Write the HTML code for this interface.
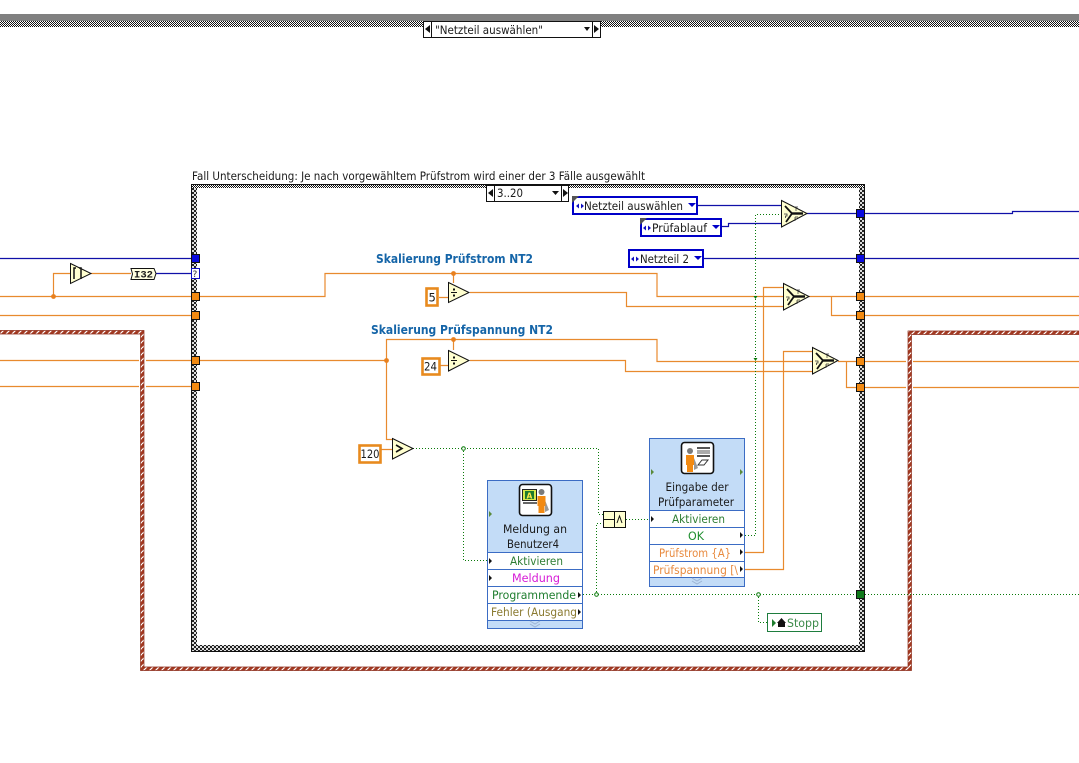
<!DOCTYPE html>
<html><head><meta charset="utf-8"><style>
html,body{margin:0;padding:0;background:#fff;width:1079px;height:763px;overflow:hidden}
svg{display:block;position:absolute;left:0;top:0}
text{font-family:"DejaVu Sans","Liberation Sans",sans-serif;font-size:11.5px;fill:#1a1a1a}
.w{fill:none;stroke:#E88A2E;stroke-width:1.2}
.b{fill:none;stroke:#1010A8;stroke-width:1.2}
.g{fill:none;stroke:#0A7A0A;stroke-width:1;stroke-dasharray:1 2}
.p{fill:#FFFFD0;stroke:#111;stroke-width:1}
.c{fill:#fff;stroke:#E88A1E;stroke-width:2.6}
.e{fill:#fff;stroke:#0000C8;stroke-width:2}
.t{stroke:#111;stroke-width:1;fill:#F28A12}
.sk{fill:#1565A8;font-weight:bold;font-size:12px}
</style></head><body>
<svg width="1079" height="763" viewBox="0 0 1079 763">
<defs>
<pattern id="h" width="2" height="2" patternUnits="userSpaceOnUse"><rect width="2" height="2" fill="#fff"/><rect width="1" height="1" fill="#111"/><rect x="1" y="1" width="1" height="1" fill="#111"/></pattern>
<pattern id="h2" width="4" height="4" patternUnits="userSpaceOnUse"><rect width="4" height="4" fill="#ddd"/><rect width="2" height="2" fill="#222"/><rect x="2" y="2" width="2" height="2" fill="#222"/></pattern>
<pattern id="r" width="6" height="6" patternUnits="userSpaceOnUse"><rect width="6" height="6" fill="#A33A22"/><path d="M0 4L4 0M3 7L7 3" stroke="#fff" stroke-width="1.2"/></pattern>
</defs>
<!-- top bar -->
<rect x="0" y="14" width="1079" height="7" fill="#808080"/>
<rect x="0" y="21" width="1079" height="6" fill="url(#h)"/>

<!-- outer loop frame -->
<path d="M0 330.5H144V667H908V331H1079V334.5H911.5V670.5H140.5V334H0Z" fill="url(#r)" stroke="#8A2A18" stroke-width=".7"/>

<!-- wires -->
<path class="b" d="M0 258.5H191"/>
<path class="b" d="M155 273.5H191"/>
<path class="w" d="M0 296.5H325V273.5H657V296.5H783"/>
<path class="w" d="M0 315.5H191"/>
<path class="w" d="M53.5 296V273.5H70"/>
<path class="w" d="M91 273.5H131"/>
<path class="w" d="M0 360.5H139M146 360.5H386.5V339.5H657V361.5H812"/>
<path class="w" d="M0 386.5H139M146 386.5H191"/>
<path class="w" d="M386.5 360V439.5H392"/>
<path class="w" d="M453.5 273V283M453.5 339V350"/>
<path class="w" d="M439 297.5H448M440 365.5H448M381 449.5H392"/>
<path class="w" d="M470 292.5H626.5V306.5H783"/>
<path class="w" d="M470 360.5H625.5V371.5H812"/>
<path class="w" d="M745 552.5H763.5V287.5H783"/>
<path class="w" d="M745 569.5H783.5V351.5H812"/>
<path class="w" d="M809 296.5H860M831.5 296.5V315.5H860"/>
<path class="w" d="M838 361.5H860M846.5 361.5V387.5H860"/>
<path class="w" d="M860 296.5H1079M860 315.5H1079"/>
<path class="w" d="M860 361.5H906M913 361.5H1079M860 387.5H906M913 387.5H1079"/>
<path class="b" d="M698 205.5H781M722 226.5H728.5V223.5H781M807 213.5H1012.5V211.5H1079"/>
<path class="b" d="M704 258.5H1079"/>
<path class="g" d="M413 448.5H598.5V514.5H604"/>
<path class="g" d="M463.5 448V560.5H488"/>
<path class="g" d="M604 523.5H596.5V594"/>
<path class="g" d="M626 519.5H650"/>
<path class="g" d="M583 594.5H1079"/>
<path class="g" d="M758.5 594V622.5H767"/>
<path class="g" d="M745 535.5H755.5V214.5H781"/>
<circle cx="53.5" cy="296.5" r="2.4" fill="#E8801E"/>
<circle cx="453.5" cy="273.5" r="2.4" fill="#E8801E"/>
<circle cx="453.5" cy="339.5" r="2.4" fill="#E8801E"/>
<circle cx="386.5" cy="360.5" r="2.4" fill="#E8801E"/>
<circle cx="463.5" cy="448.5" r="1.8" fill="#fff" stroke="#0A7A0A"/>
<circle cx="596.5" cy="594.5" r="1.8" fill="#fff" stroke="#0A7A0A"/>
<circle cx="758.5" cy="594.5" r="1.8" fill="#fff" stroke="#0A7A0A"/>
<path d="M753.5 358L755.5 361L757.5 358M753.5 296L755.5 299L757.5 296" fill="#0A7A0A"/>

<!-- case structure frame -->
<rect x="191" y="188" width="6" height="458" fill="url(#h2)"/>
<rect x="859" y="188" width="6" height="458" fill="url(#h2)"/>
<rect x="191" y="184" width="674" height="4" fill="url(#h)"/>
<rect x="191" y="645" width="674" height="6" fill="url(#h2)"/>
<path d="M191.5 652V184.5H864.5V651.5H191" fill="none" stroke="#111"/>

<text x="192" y="180" textLength="453" lengthAdjust="spacingAndGlyphs">Fall Unterscheidung: Je nach vorgewähltem Prüfstrom wird einer der 3 Fälle ausgewählt</text>
<text class="sk" x="376" y="263" textLength="157" lengthAdjust="spacingAndGlyphs">Skalierung Prüfstrom NT2</text>
<text class="sk" x="371" y="334" textLength="182" lengthAdjust="spacingAndGlyphs">Skalierung Prüfspannung NT2</text>

<!-- terminals -->
<rect x="191.5" y="254.5" width="8" height="8" fill="#0A0AE0" stroke="#111"/>
<rect x="191.5" y="268.5" width="8" height="10" fill="#fff" stroke="#1010C0"/>
<text x="192.5" y="277" style="font-size:9px;fill:#333">?</text>
<rect class="t" x="191.5" y="292.5" width="8" height="8"/>
<rect class="t" x="191.5" y="311.5" width="8" height="8"/>
<rect class="t" x="191.5" y="356.5" width="8" height="8"/>
<rect class="t" x="191.5" y="382.5" width="8" height="8"/>
<rect x="856.5" y="209.5" width="8" height="8" fill="#0A0AE0" stroke="#111"/>
<rect x="856.5" y="254.5" width="8" height="8" fill="#0A0AE0" stroke="#111"/>
<rect class="t" x="856.5" y="292.5" width="8" height="8"/>
<rect class="t" x="856.5" y="311.5" width="8" height="8"/>
<rect class="t" x="856.5" y="357.5" width="8" height="8"/>
<rect class="t" x="856.5" y="383.5" width="8" height="8"/>
<rect x="856.5" y="590.5" width="8" height="8" fill="#0F7A1A" stroke="#111"/>

<!-- outer selector -->
<rect x="423.5" y="21.5" width="177" height="16" fill="#fff" stroke="#111"/>
<path d="M431.5 21V37M592.5 21V37" stroke="#111"/>
<path d="M430 25V33L425 29ZM594 25V33L599 29Z" fill="#111"/>
<path d="M584 27H590L587 31Z" fill="#111"/>
<text x="435" y="34" textLength="108" lengthAdjust="spacingAndGlyphs">"Netzteil auswählen"</text>

<!-- inner selector -->
<rect x="486.5" y="185.5" width="82" height="16" fill="#fff" stroke="#111"/>
<path d="M494.5 185V201M561.5 185V201" stroke="#111"/>
<path d="M493 189V197L488 193ZM563 189V197L568 193Z" fill="#111"/>
<path d="M552 191H559L555.5 195Z" fill="#111"/>
<text x="497" y="197" textLength="26" lengthAdjust="spacingAndGlyphs">3..20</text>

<!-- enums -->
<rect class="e" x="573" y="197" width="124" height="17"/>
<path d="M572 196H579L572 203Z" fill="#555"/>
<path d="M579 203.5L576 206L579 208.5ZM581 203.5L584 206L581 208.5Z" fill="#1010C0"/>
<text x="584" y="210" textLength="99" lengthAdjust="spacingAndGlyphs">Netzteil auswählen</text>
<path d="M688 203H696L692 207Z" fill="#0000C8"/>
<rect class="e" x="641" y="219" width="80" height="17"/>
<path d="M640 218H647L640 225Z" fill="#555"/>
<path d="M646 225.5L643 228L646 230.5ZM648 225.5L651 228L648 230.5Z" fill="#1010C0"/>
<text x="652" y="232" textLength="55" lengthAdjust="spacingAndGlyphs">Prüfablauf</text>
<path d="M712 225H720L716 229Z" fill="#0000C8"/>
<rect class="e" x="629" y="250" width="74" height="17"/>
<path d="M634 256.5L631 259L634 261.5ZM636 256.5L639 259L636 261.5Z" fill="#1010C0"/>
<text x="640" y="263" textLength="49" lengthAdjust="spacingAndGlyphs">Netzteil 2</text>
<path d="M694 256H702L698 260Z" fill="#0000C8"/>

<!-- left primitives -->
<path class="p" d="M70.5 263.5L91 273.5L70.5 283.5Z"/>
<path d="M76 268H74V279M79 268H81V279" fill="none" stroke="#111" stroke-width="1.5"/>
<path d="M131 268.5H154L156 273.5L154 279.5H131L132.5 274Z" fill="#FFFFE0" stroke="#111"/>
<text x="134" y="277.5" textLength="19" lengthAdjust="spacingAndGlyphs" style="font-size:10px;font-weight:bold;font-family:'Liberation Mono',monospace">I32</text>

<!-- constants -->
<rect class="c" x="426.5" y="288.5" width="11" height="17"/>
<text x="428.5" y="301.5">5</text>
<rect class="c" x="422.5" y="358.5" width="17" height="16"/>
<text x="424" y="370.5" textLength="13" lengthAdjust="spacingAndGlyphs">24</text>
<rect class="c" x="359.5" y="445.5" width="21" height="17"/>
<text x="360.5" y="458" textLength="19" lengthAdjust="spacingAndGlyphs">120</text>

<!-- divide / compare -->
<path class="p" d="M448.5 282.5L469 292.5L448.5 302.5Z"/>
<path d="M451 292.5H457" stroke="#111"/><rect x="453" y="288.5" width="2" height="2" fill="#111"/><rect x="453" y="294.5" width="2" height="2" fill="#111"/>
<path class="p" d="M448.5 350.5L469 360.5L448.5 371Z"/>
<path d="M451 360.5H457" stroke="#111"/><rect x="453" y="356.5" width="2" height="2" fill="#111"/><rect x="453" y="362.5" width="2" height="2" fill="#111"/>
<path class="p" d="M392.5 438.5L413 448.5L392.5 459Z"/>
<path d="M396 445L402 448.5L396 452" fill="none" stroke="#111" stroke-width="1.6"/>

<!-- select nodes -->
<g id="s1">
<path class="p" d="M781.5 200.5L807 213.5L781.5 227Z"/>
<path d="M785 206L792 213.5L786 222" fill="none" stroke="#111" stroke-width="1.8"/>
<path d="M792 213.5H803" stroke="#111" stroke-width="2.4"/>
<path d="M784 214H787V216H785.5V218" fill="none" stroke="#333" stroke-width=".8"/>
<path d="M794 207H798M796 207V211M795 217V221M795 217H798M795 219H797" fill="none" stroke="#333" stroke-width=".7"/>
</g>
<g transform="translate(2,83)"><path class="p" d="M781.5 200.5L807 213.5L781.5 227Z"/><path d="M785 206L792 213.5L786 222" fill="none" stroke="#111" stroke-width="1.8"/><path d="M792 213.5H803" stroke="#111" stroke-width="2.4"/><path d="M784 214H787V216H785.5V218" fill="none" stroke="#333" stroke-width=".8"/><path d="M794 207H798M796 207V211M795 217V221M795 217H798M795 219H797" fill="none" stroke="#333" stroke-width=".7"/></g>
<g transform="translate(31,147)"><path class="p" d="M781.5 200.5L807 213.5L781.5 227Z"/><path d="M785 206L792 213.5L786 222" fill="none" stroke="#111" stroke-width="1.8"/><path d="M792 213.5H803" stroke="#111" stroke-width="2.4"/><path d="M784 214H787V216H785.5V218" fill="none" stroke="#333" stroke-width=".8"/><path d="M794 207H798M796 207V211M795 217V221M795 217H798M795 219H797" fill="none" stroke="#333" stroke-width=".7"/></g>

<!-- AND -->
<rect class="p" x="603.5" y="511.5" width="22" height="16"/>
<path d="M603.5 519.5H614.5M614.5 511.5V527.5" stroke="#111"/>
<path d="M617 523L619.5 516L622 523" fill="none" stroke="#111"/>

<!-- Meldung node -->
<rect x="487.5" y="480.5" width="95" height="148" fill="#C3DCF7" stroke="#3B6CC4"/>
<g fill="#fff" stroke="#3B6CC4">
<rect x="487.5" y="552.5" width="95" height="17"/>
<rect x="487.5" y="569.5" width="95" height="17"/>
<rect x="487.5" y="586.5" width="95" height="17"/>
<rect x="487.5" y="603.5" width="95" height="17"/>
</g>
<rect x="519.5" y="484.5" width="32" height="31" rx="3" fill="#fff" stroke="#111" stroke-width="1.6"/>
<rect x="522.5" y="489.5" width="14" height="11" fill="#D8E84A" stroke="#222"/>
<rect x="525" y="491" width="9" height="8" fill="#1E7A2E"/>
<text x="526.5" y="498.5" style="font-size:7.5px;font-weight:bold;fill:#FFE94A">A</text>
<path d="M523 503H537" stroke="#666" stroke-width="2"/>
<circle cx="541.5" cy="492" r="3" fill="#7A7A7A"/>
<path d="M545 500L549 510L545 512Z" fill="#999"/>
<path d="M537.5 496H545.5V506H544.5V513H538.5V506H537.5Z" fill="#F28A12"/>
<path d="M489 511L492 514L489 517Z" fill="#5A8A3A"/>
<text x="535" y="533" text-anchor="middle" textLength="64" lengthAdjust="spacingAndGlyphs">Meldung an</text>
<text x="533" y="548" text-anchor="middle" textLength="52" lengthAdjust="spacingAndGlyphs">Benutzer4</text>
<text x="510" y="565" textLength="53" lengthAdjust="spacingAndGlyphs" style="fill:#2E7D32">Aktivieren</text>
<text x="512" y="582" textLength="48" lengthAdjust="spacingAndGlyphs" style="fill:#D61AD6">Meldung</text>
<text x="492" y="599" textLength="84" lengthAdjust="spacingAndGlyphs" style="fill:#1E7D2E">Programmende</text>
<text x="491" y="616" textLength="86" lengthAdjust="spacingAndGlyphs" style="fill:#8A7A30">Fehler (Ausgang</text>
<path d="M489 558L492 561L489 564ZM489 575L492 578L489 581ZM578 592L581 595L578 598ZM578 609L581 612L578 615Z" fill="#111"/>
<path d="M530 621L535 624L540 621M530 624L535 627L540 624" fill="none" stroke="#9DB4D4"/>

<!-- Eingabe node -->
<rect x="649.5" y="438.5" width="95" height="148" fill="#C3DCF7" stroke="#3B6CC4"/>
<g fill="#fff" stroke="#3B6CC4">
<rect x="649.5" y="510.5" width="95" height="17"/>
<rect x="649.5" y="527.5" width="95" height="17"/>
<rect x="649.5" y="544.5" width="95" height="17"/>
<rect x="649.5" y="561.5" width="95" height="16"/>
</g>
<rect x="681.5" y="442.5" width="32" height="31" rx="3" fill="#fff" stroke="#111" stroke-width="1.6"/>
<circle cx="690" cy="451" r="3" fill="#7A7A7A"/>
<path d="M694 458L698 468L694 470Z" fill="#999"/>
<path d="M686 455H694V465H693V472H687V465H686Z" fill="#F28A12"/>
<rect x="697" y="447" width="13" height="2" fill="#555"/><rect x="697" y="450" width="13" height="4" fill="#aaa"/><rect x="697" y="455" width="13" height="2" fill="#555"/>
<path d="M698 465L702 460H708L704 465Z" fill="#fff" stroke="#333"/>
<path d="M651 469L654 472L651 475ZM740 469L743 472L740 475Z" fill="#5A8A3A"/>
<text x="697" y="491" text-anchor="middle" textLength="63" lengthAdjust="spacingAndGlyphs">Eingabe der</text>
<text x="696" y="506" text-anchor="middle" textLength="76" lengthAdjust="spacingAndGlyphs">Prüfparameter</text>
<text x="672" y="523" textLength="53" lengthAdjust="spacingAndGlyphs" style="fill:#2E7D32">Aktivieren</text>
<text x="688" y="540" textLength="16" lengthAdjust="spacingAndGlyphs" style="fill:#1E8E2E">OK</text>
<text x="659" y="557" textLength="72" lengthAdjust="spacingAndGlyphs" style="fill:#E88A3E">Prüfstrom {A}</text>
<text x="653" y="574" textLength="85" lengthAdjust="spacingAndGlyphs" style="fill:#E88A3E">Prüfspannung [\</text>
<path d="M651 516L654 519L651 522ZM740 532L743 535L740 538ZM740 549L743 552L740 555ZM740 566L743 569L740 572Z" fill="#111"/>
<path d="M692 578L697 581L702 578M692 581L697 584L702 581" fill="none" stroke="#9DB4D4"/>

<!-- Stopp -->
<rect x="767.5" y="613.5" width="54" height="18" fill="#fff" stroke="#1E7D3E"/>
<path d="M772 619L776 623L772 627Z" fill="#1E7D2E"/>
<path d="M777 623L781.5 618L786 623H785V627H778V623Z" fill="#111"/>
<text x="787" y="627" textLength="32" lengthAdjust="spacingAndGlyphs" style="fill:#3D8B4A">Stopp</text>
</svg>
</body></html>
